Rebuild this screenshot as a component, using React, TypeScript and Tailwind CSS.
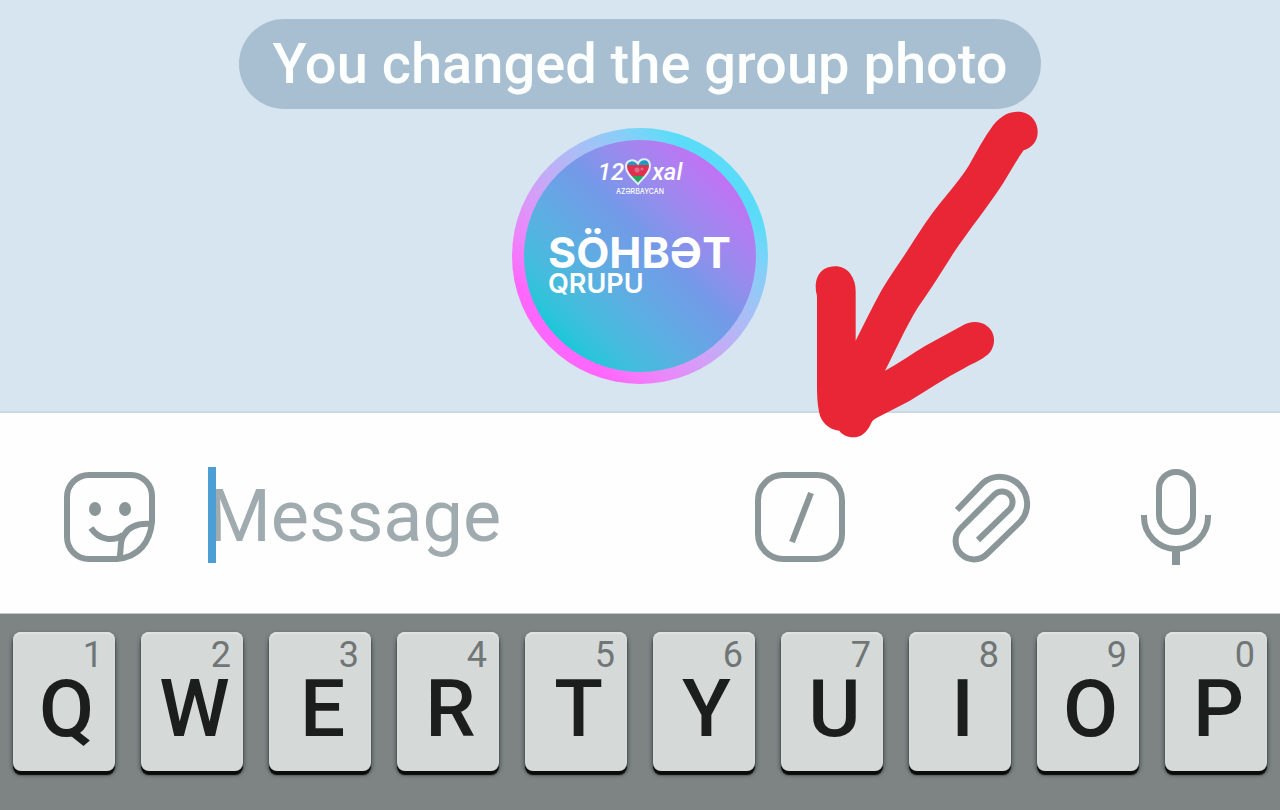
import type { ReactNode } from "react";

const KEYS = ["Q", "W", "E", "R", "T", "Y", "U", "I", "O", "P"];

function IconButton({ label, children }: { label: string; children: ReactNode }) {
  return (
    <button type="button" aria-label={label} className="shrink-0">
      <svg
        width="96"
        height="96"
        viewBox="0 0 96 96"
        fill="none"
        stroke="#8b9698"
        strokeWidth="6"
        className="block overflow-visible"
      >
        {children}
      </svg>
    </button>
  );
}

function Heart() {
  return (
    <svg width="28" height="30" viewBox="0 0 28 30" className="block">
      <defs>
        <clipPath id="heart">
          <path d="M14 27C8 21 2 16 2 9.500C2 3 10 1 14 6.500C17 0 26 1 26 9C26 16 19 21 14 27Z" />
        </clipPath>
      </defs>
      <g clipPath="url(#heart)">
        <rect width="28" height="9" fill="#1d9cc0" />
        <rect y="8" width="28" height="11" fill="#e0304f" />
        <rect y="19" width="28" height="11" fill="#24a45c" />
        <circle cx="13" cy="13" r="2.500" fill="#d8708c" />
        <circle cx="18" cy="12" r="1.500" fill="#d8708c" />
      </g>
      <path
        d="M14 27C8 21 2 16 2 9.500C2 3 10 1 14 6.500C17 0 26 1 26 9C26 16 19 21 14 27Z"
        fill="none"
        stroke="#e4ecfb"
        strokeWidth="2"
      />
    </svg>
  );
}

function GroupPhoto() {
  return (
    <div className="size-64 rounded-full bg-linear-to-tr from-[#ff66fb] from-20% via-[#bdb0f6] via-50% to-[#5adcf8] to-80% p-3">
      <div className="flex h-full flex-col rounded-full bg-linear-to-tr from-[#18c8d8] from-15% via-[#7399e8] via-55% to-[#c072f4] to-85% pt-4 font-[Inter,sans-serif] text-white">
        <div className="flex h-8 items-center justify-center font-[Roboto,sans-serif] text-2xl leading-8 font-medium italic">
          <span>12</span>
          <Heart />
          <span>xal</span>
        </div>
        <div className="text-center text-[7px] leading-2 font-medium">AZƏRBAYCAN</div>
        <div className="mt-9 pl-6 text-[43px] leading-10 font-bold">SÖHBƏT</div>
        <div className="pl-6 text-[27px] leading-6 font-semibold">QRUPU</div>
      </div>
    </div>
  );
}

function Arrow() {
  return (
    <svg
      width="270"
      height="350"
      viewBox="0 0 810 1050"
      fill="#e92635"
      aria-hidden="true"
      className="pointer-events-none absolute top-[100px] left-1/2 ml-[150px]"
    >
      <path d="M610 75C640 38 670 32 695 36C725 42 744 68 743 98C742 125 725 143 701 151C665 202 645 246 612 290C570 350 530 400 490 460C455 515 425 565 385 620C345 685 317 750 285 812C325 790 365 763 405 738L515 678C540 662 570 662 590 677C617 697 618 732 600 757C585 775 550 790 520 806C465 835 410 870 357 904L265 951C250 958 245 965 241 975C228 1000 212 1012 190 1012C170 1011 157 1004 148 992C115 988 92 965 87 935C82 910 81 885 81 855V588C72 555 78 523 103 507C130 492 165 498 181 521C192 536 197 553 197 575V722C222 672 248 619 275 570C305 520 335 480 365 432C395 386 418 350 450 310C482 270 515 232 538 194C562 152 582 112 610 75Z" />
    </svg>
  );
}

function Keyboard() {
  return (
    <section
      aria-label="Keyboard"
      className="grid grow grid-cols-10 items-start gap-[26px] border-t border-[#c3c8c8] bg-[#7e8484] px-[13px] pt-[18px] pb-[38px]"
    >
      {KEYS.map((key, i) => (
        <button
          key={key}
          type="button"
          className="flex h-[139px] flex-col rounded-lg bg-[#d5dad9] shadow-[0_4px_1px_#0a0c0c,0_3px_5px_#303535,inset_0_2px_1px_#dfe4e3]"
        >
          <span className="self-end pt-[5px] pr-3 text-4xl leading-9 text-[#707575]">{(i + 1) % 10}</span>
          <span className="self-center pl-[5px] text-[80px] leading-[72px] font-medium text-[#1b1e1c]">{key}</span>
        </button>
      ))}
    </section>
  );
}

export default function App() {
  return (
    <div className="flex min-h-screen flex-col font-[Roboto,sans-serif]">
      <main className="relative flex flex-col items-center border-b-2 border-[#cbd8e8] bg-[#d6e5ef] pt-[19px] pb-[27px]">
        <p className="rounded-full bg-[#a8bfd1] px-[33px] text-[56px] leading-[90px] font-medium whitespace-nowrap text-[#fcfffe]">
          You changed the group photo
        </p>
        <div className="mt-[19px]">
          <GroupPhoto />
        </div>
        <Arrow />
      </main>

      <form className="flex h-[200px] items-center bg-[#fefefe] pt-2 pr-14 pl-[62px]">
        <IconButton label="Stickers">
          <path d="M27 6H69A21 21 0 0 1 90 27V53C88 73 77 88 55 90H27A22 22 0 0 1 5 68V28A22 22 0 0 1 27 6Z" />
          <path d="M29 59C37 71 51 73 61 66M57 90C60 81 57 72 62 66C67 57 76 54 90 55" />
          <ellipse cx="33" cy="40" rx="6" ry="7" fill="#8b9698" stroke="none" />
          <ellipse cx="63" cy="40" rx="6" ry="7" fill="#8b9698" stroke="none" />
        </IconButton>
        <div className="relative mb-1 ml-[50px] flex min-w-0 grow items-center">
          <input
            type="text"
            aria-label="Message"
            placeholder="Message"
            className="h-24 w-full bg-transparent pt-1 text-[72px] text-[#1b1e1c] outline-none placeholder:text-[#a0abaf]"
          />
          <span className="absolute inset-y-0 left-0 w-2 bg-[#4b9fd5]" />
        </div>
        <div className="flex gap-[92px]">
          <IconButton label="Bot commands">
            <rect x="6" y="6" width="84" height="84" rx="25" />
            <path d="M59 24L40 73" />
          </IconButton>
          <IconButton label="Attach file">
            <path d="M17 41L43 14A27 27 0 0 1 81 52L47 85A18 18 0 0 1 21 59L54.500 25.500A10.500 10.500 0 0 1 69.500 40.500L38 71" />
          </IconButton>
          <IconButton label="Record voice message">
            <rect x="31" y="3" width="34" height="60" rx="17" />
            <path d="M16 46V48A32 32 0 0 0 80 48V46" />
            <path d="M48 80V96" strokeWidth="8" />
          </IconButton>
        </div>
      </form>

      <Keyboard />
    </div>
  );
}
